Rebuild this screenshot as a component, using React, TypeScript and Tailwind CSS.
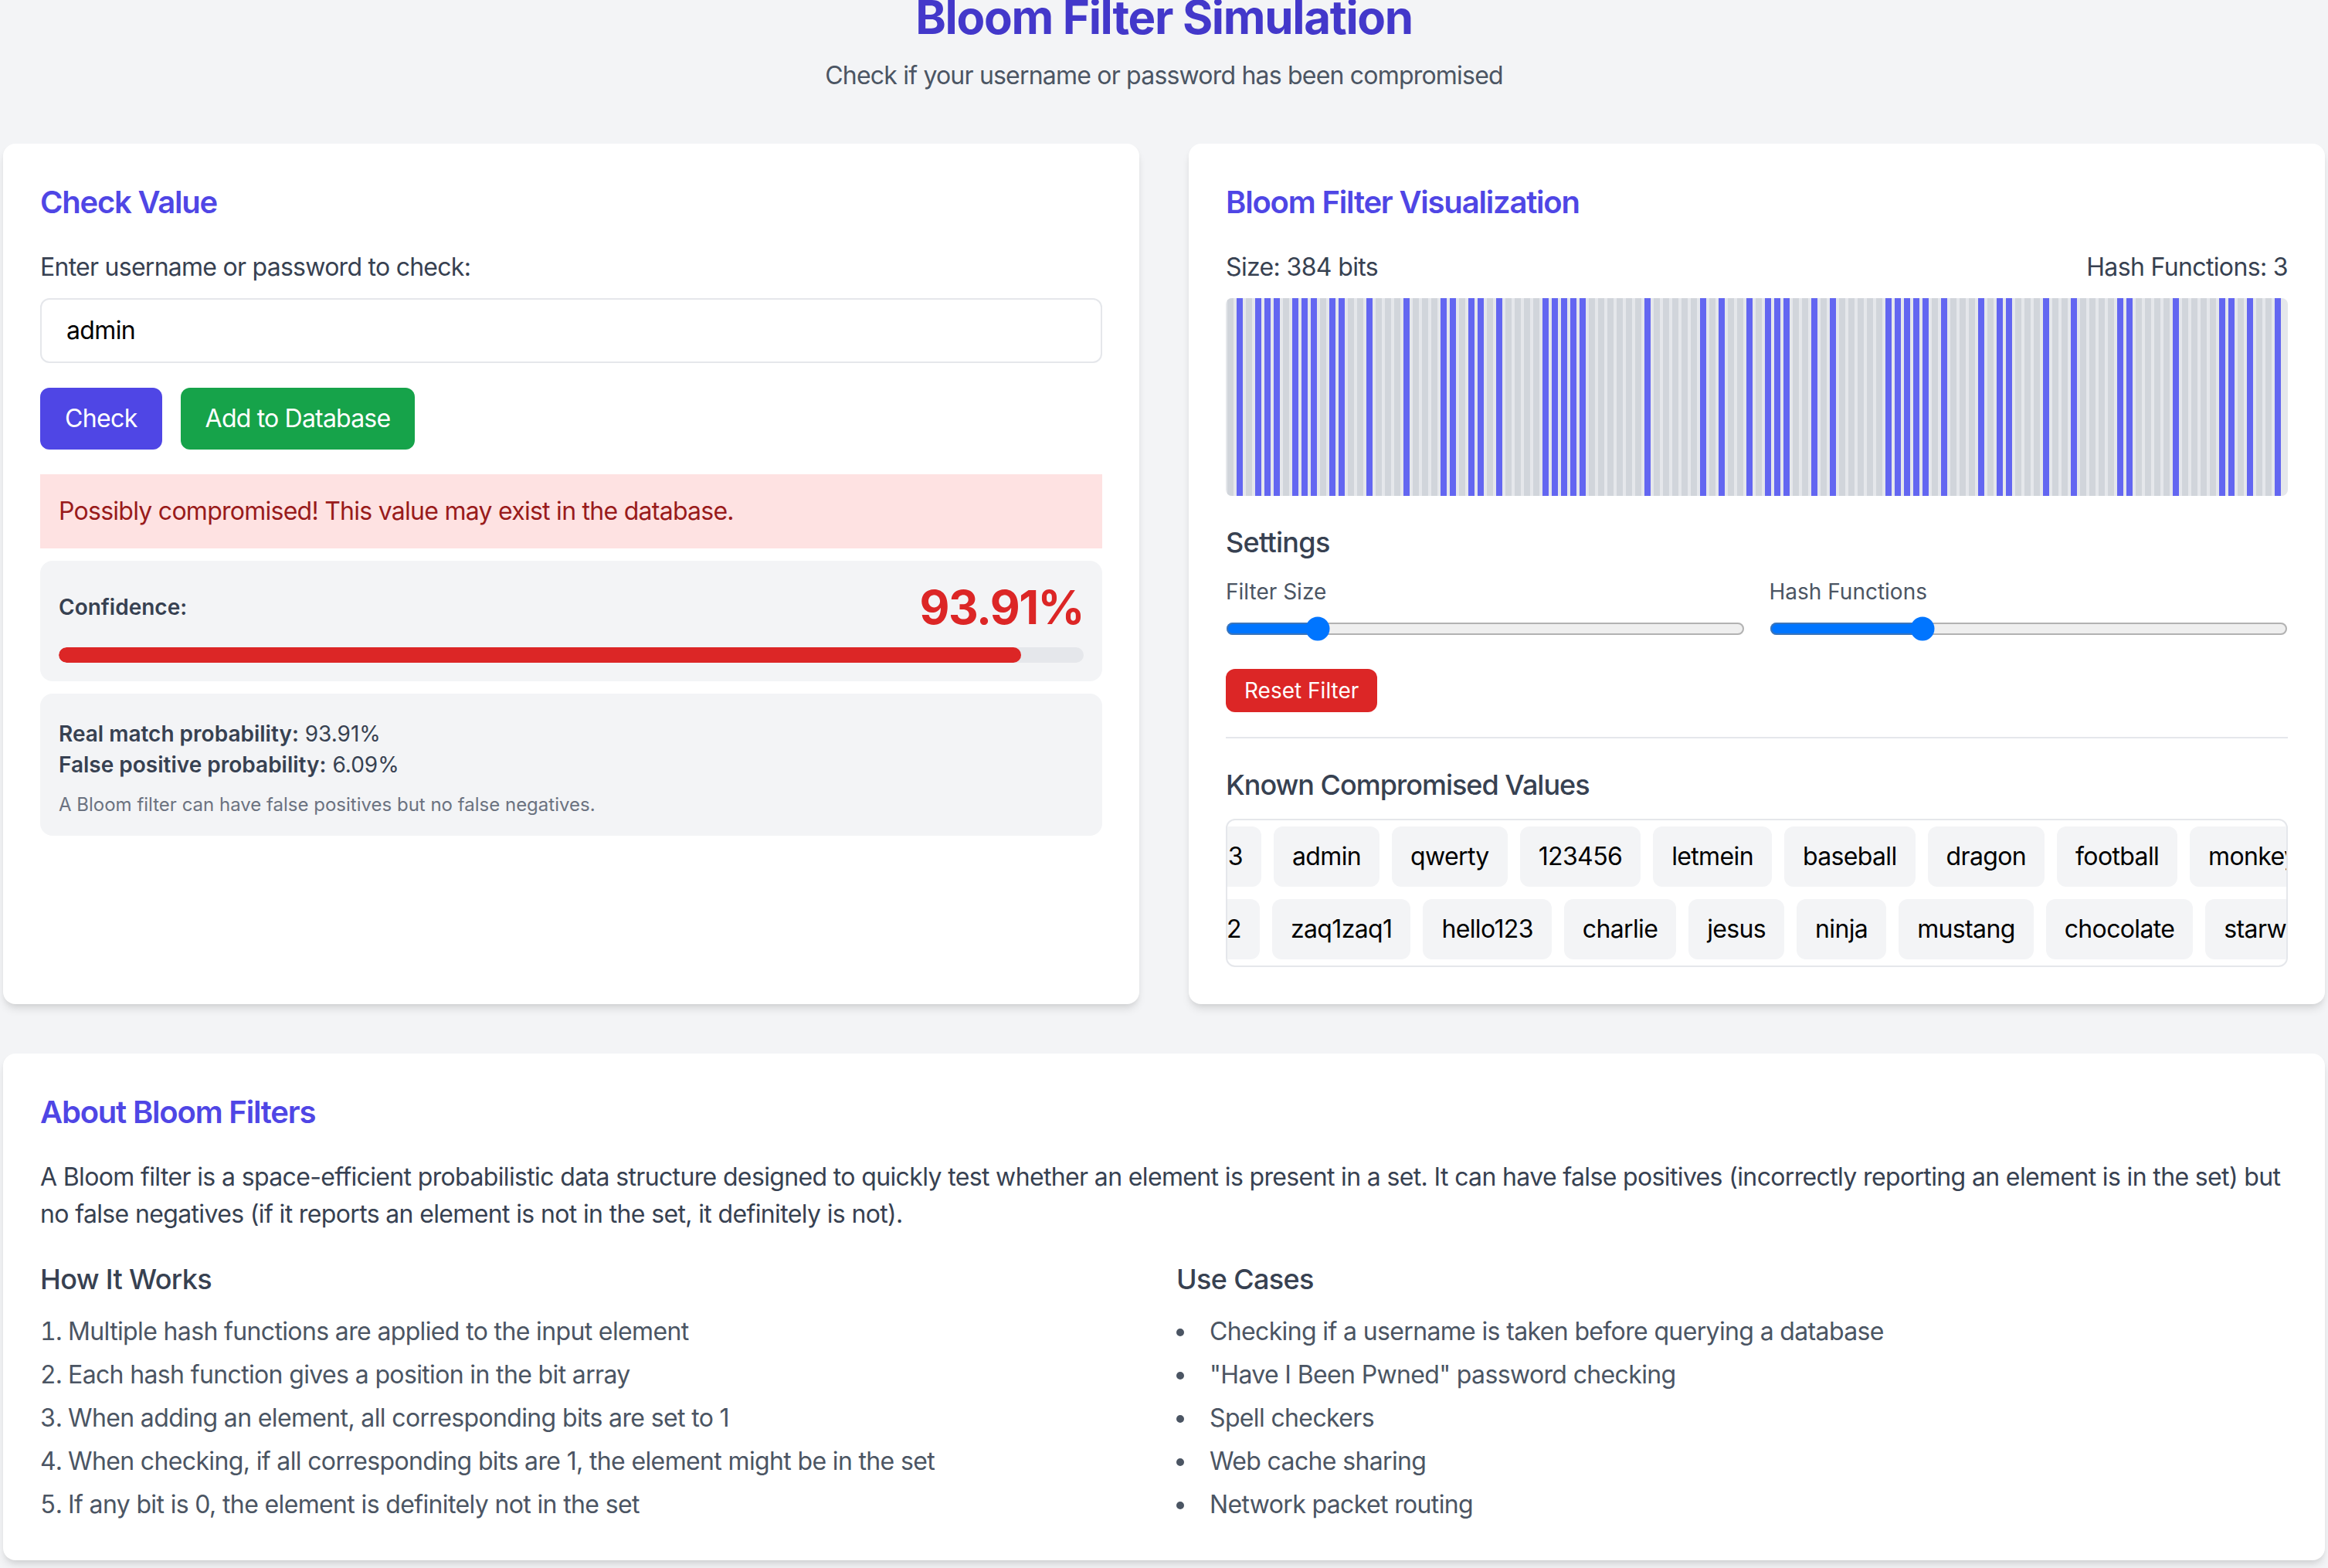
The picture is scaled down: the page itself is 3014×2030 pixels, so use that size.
import React from "react";

const ON = new Set([
  1, 3, 4, 5, 7, 8, 9, 11, 12, 15, 19, 23, 24, 26, 27, 29, 34, 35, 36, 37, 38, 45, 51, 53, 56, 58, 59, 60, 63, 65, 71,
  72, 73, 74, 75, 77, 81, 83, 84, 88, 91, 96, 97, 102, 107, 108, 110, 113,
]);
const BITS = Array.from({ length: 114 }, (_, i) => ON.has(i));

const ROW1 = ["admin", "qwerty", "123456", "letmein", "baseball", "dragon", "football", "monkey", "shadow"];
const ROW2 = ["zaq1zaq1", "hello123", "charlie", "jesus", "ninja", "mustang", "chocolate", "starwars", "welcome"];

const HOW = [
  "Multiple hash functions are applied to the input element",
  "Each hash function gives a position in the bit array",
  "When adding an element, all corresponding bits are set to 1",
  "When checking, if all corresponding bits are 1, the element might be in the set",
  "If any bit is 0, the element is definitely not in the set",
];

const USES = [
  "Checking if a username is taken before querying a database",
  '"Have I Been Pwned" password checking',
  "Spell checkers",
  "Web cache sharing",
  "Network packet routing",
];

function Chip({ children }: { children: React.ReactNode }) {
  return (
    <span className="shrink-0 h-[39px] flex items-center px-3 bg-[#f3f4f6] rounded-md text-black whitespace-nowrap">
      {children}
    </span>
  );
}

function ChipRow({ first, items, lead }: { first: string; items: string[]; lead: string }) {
  return (
    <div className="flex gap-2">
      <div className={`${lead} shrink-0 flex justify-end`}>
        <Chip>{first}</Chip>
      </div>
      {items.map((v) => (
        <Chip key={v}>{v}</Chip>
      ))}
    </div>
  );
}

export default function App() {
  return (
    <div className="[zoom:2] bg-[#f3f4f6] font-[Inter,sans-serif] tracking-[-0.02em] px-0.5 pb-8 overflow-hidden">
      <header className="-mt-[7px] mb-8 text-center">
        <h1 className="text-3xl font-bold text-[#4338ca] tracking-[-0.022em]">Bloom Filter Simulation</h1>
        <p className="mt-2 text-[#4b5563] tracking-[-0.025em]">Check if your username or password has been compromised</p>
      </header>

      <div className="grid grid-cols-2 gap-8">
        {/* Left card */}
        <section className="bg-white rounded-lg shadow-md p-6">
          <h2 className="text-xl font-semibold text-[#4f46e5] mb-4 tracking-[-0.03em]">Check Value</h2>
          <label className="block text-[#374151] mb-2 tracking-[-0.023em]">Enter username or password to check:</label>
          <input
            type="text"
            defaultValue="admin"
            className="w-full px-4 py-2 border border-[#e5e7eb] rounded-md text-black bg-white"
          />
          <div className="mt-4 flex gap-3">
            <button className="px-4 py-2 bg-[#4f46e5] text-white rounded-md">Check</button>
            <button className="px-4 py-2 bg-[#16a34a] text-white rounded-md tracking-[-0.025em]">Add to Database</button>
          </div>

          <div className="mt-4 p-3 bg-[#fee2e2] text-[#991b1b] tracking-[-0.023em]">
            Possibly compromised! This value may exist in the database.
          </div>

          <div className="mt-2 p-3 bg-[#f3f4f6] rounded-lg">
            <div className="flex items-center justify-between">
              <span className="text-sm font-semibold text-[#374151] tracking-normal">Confidence:</span>
              <span className="text-3xl font-bold text-[#dc2626] tracking-[-0.025em]">93.91%</span>
            </div>
            <div className="mt-2 h-2.5 bg-[#e5e7eb] rounded-full overflow-hidden">
              <div className="h-full bg-[#dc2626] rounded-full" style={{ width: "93.91%" }} />
            </div>
          </div>

          <div className="mt-2 px-3 pt-4 pb-3 bg-[#f3f4f6] rounded-lg text-sm text-[#374151] tracking-normal">
            <p>
              <span className="font-semibold">Real match probability:</span> 93.91%
            </p>
            <p>
              <span className="font-semibold">False positive probability:</span> 6.09%
            </p>
            <p className="mt-2 text-xs text-[#6b7280] tracking-normal">
              A Bloom filter can have false positives but no false negatives.
            </p>
          </div>
        </section>

        {/* Right card */}
        <section className="bg-white rounded-lg shadow-md p-6">
          <h2 className="text-xl font-semibold text-[#4f46e5] mb-4 tracking-[-0.03em]">Bloom Filter Visualization</h2>
          <div className="flex justify-between text-[#374151] mb-2">
            <span>Size: 384 bits</span>
            <span>Hash Functions: 3</span>
          </div>
          <div className="h-32 bg-[#e5e7eb] rounded pl-px flex gap-0.5 overflow-hidden">
            {BITS.map((on, i) => (
              <div key={i} className={`w-1 h-full shrink-0 ${on ? "bg-[#6366f1]" : "bg-[#d1d5db]"}`} />
            ))}
          </div>

          <h3 className="mt-4 mb-2 text-lg font-medium text-[#374151] tracking-[-0.02em]">Settings</h3>
          <div className="grid grid-cols-2 gap-4">
            <div>
              <label className="block text-sm text-[#4b5563] mb-1 tracking-normal">Filter Size</label>
              <input type="range" min={64} max={2048} step={32} defaultValue={384} className="w-full h-5 block" />
            </div>
            <div>
              <label className="block text-sm text-[#4b5563] mb-1 tracking-normal">Hash Functions</label>
              <input type="range" min={1} max={8} defaultValue={3} className="w-full h-5 block" />
            </div>
          </div>
          <button className="mt-4 px-3 py-1 text-sm bg-[#dc2626] text-white rounded-md tracking-normal">
            Reset Filter
          </button>

          <div className="mt-4 border-t border-[#e5e7eb] pt-4">
            <h3 className="mb-2 text-lg font-medium text-[#374151] tracking-[-0.028em]">Known Compromised Values</h3>
            <div className="border border-[#e5e7eb] rounded-md overflow-hidden py-1 flex flex-col gap-2">
              <ChipRow first="abc123" items={ROW1} lead="w-[22px]" />
              <ChipRow first="qwerty12" items={ROW2} lead="w-[21px]" />
            </div>
          </div>
        </section>
      </div>

      {/* About */}
      <section className="mt-8 bg-white rounded-lg shadow-md p-6">
        <h2 className="text-xl font-semibold text-[#4f46e5] mb-4 tracking-[-0.03em]">About Bloom Filters</h2>
        <p className="text-[#374151] mb-4">
          A Bloom filter is a space-efficient probabilistic data structure designed to quickly test whether an element is
          present in a set. It can have false positives (incorrectly reporting an element is in the set) but no false
          negatives (if it reports an element is not in the set, it definitely is not).
        </p>
        <div className="grid grid-cols-2 gap-4">
          <div>
            <h3 className="text-lg font-medium text-[#374151] mb-2">How It Works</h3>
            <ol className="list-decimal list-inside space-y-1 text-[#4b5563]">
              {HOW.map((t) => (
                <li key={t}>{t}</li>
              ))}
            </ol>
          </div>
          <div>
            <h3 className="text-lg font-medium text-[#374151] mb-2">Use Cases</h3>
            <ul className="list-disc list-inside space-y-1 text-[#4b5563]">
              {USES.map((t) => (
                <li key={t}>{t}</li>
              ))}
            </ul>
          </div>
        </div>
      </section>
    </div>
  );
}
